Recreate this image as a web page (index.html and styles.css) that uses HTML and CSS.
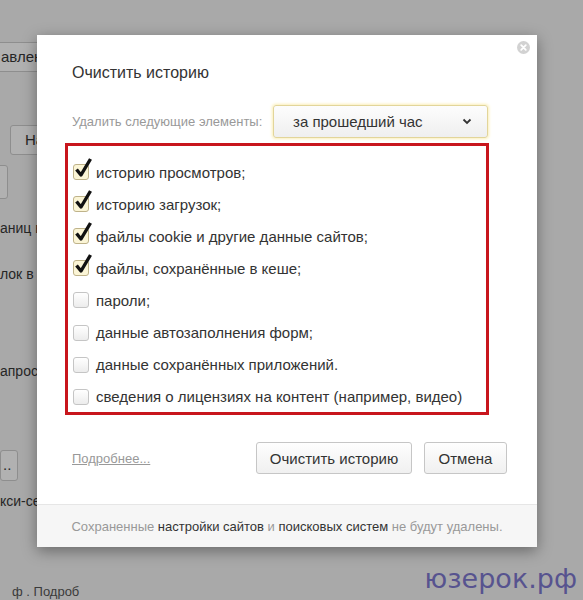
FILE: index.html
```html
<!DOCTYPE html>
<html lang="ru">
<head>
  <meta charset="UTF-8">
  <title>Очистить историю</title>
  <link rel="stylesheet" href="styles.css">
</head>
<body>
  <div class="page">
    <div class="bg-btn bg-btn-top">авлени</div>
    <div class="bg-btn bg-btn-na">На</div>
    <div class="bg-btn bg-btn-small"></div>
    <p class="bg-text bg-t1">аниц в</p>
    <p class="bg-text bg-t2">лок в</p>
    <p class="bg-text bg-t3">апрос</p>
    <div class="bg-btn bg-btn-low">..</div>
    <p class="bg-text bg-t4">кси-сер</p>
    <p class="bg-text bg-t5">ф . Подроб</p>
  </div>

  <div class="dialog">
    <span class="close">
      <svg width="13" height="13" viewBox="0 0 13 13">
        <circle cx="6.5" cy="6.5" r="6.5" fill="#d2d2d2"/>
        <path d="M4.2 4.2 L8.8 8.8 M8.8 4.2 L4.2 8.8" stroke="#fff" stroke-width="1.8" stroke-linecap="round"/>
      </svg>
    </span>
    <div class="body">
      <h1>Очистить историю</h1>

      <div class="period">
        <span class="label">Удалить следующие элементы:</span>
        <div class="select">
          <span>за прошедший час</span>
          <svg width="10" height="7" viewBox="0 0 10 7"><path d="M1.5 1.5 L5 5 L8.5 1.5" fill="none" stroke="#333" stroke-width="1.8"/></svg>
        </div>
      </div>

      <div class="items">
        <div class="item"><span class="box checked"><svg width="22" height="24" viewBox="0 0 22 24"><path d="M3.5 13.5 L8 19 L17.5 3" fill="none" stroke="#111" stroke-width="3.4" stroke-linejoin="round"/></svg></span>историю просмотров;</div>
        <div class="item"><span class="box checked"><svg width="22" height="24" viewBox="0 0 22 24"><path d="M3.5 13.5 L8 19 L17.5 3" fill="none" stroke="#111" stroke-width="3.4" stroke-linejoin="round"/></svg></span>историю загрузок;</div>
        <div class="item"><span class="box checked"><svg width="22" height="24" viewBox="0 0 22 24"><path d="M3.5 13.5 L8 19 L17.5 3" fill="none" stroke="#111" stroke-width="3.4" stroke-linejoin="round"/></svg></span>файлы cookie и другие данные сайтов;</div>
        <div class="item"><span class="box checked"><svg width="22" height="24" viewBox="0 0 22 24"><path d="M3.5 13.5 L8 19 L17.5 3" fill="none" stroke="#111" stroke-width="3.4" stroke-linejoin="round"/></svg></span>файлы, сохранённые в кеше;</div>
        <div class="item"><span class="box"></span>пароли;</div>
        <div class="item"><span class="box"></span>данные автозаполнения форм;</div>
        <div class="item"><span class="box"></span>данные сохранённых приложений.</div>
        <div class="item"><span class="box"></span>сведения о лицензиях на контент (например, видео)</div>
      </div>

      <div class="actions">
        <a class="more" href="#">Подробнее...</a>
        <div class="buttons">
          <button class="btn btn-clear">Очистить историю</button>
          <button class="btn btn-cancel">Отмена</button>
        </div>
      </div>
    </div>
    <div class="footer">
      <p>Сохраненные <span class="dark">настройки сайтов</span> и <span class="dark">поисковых систем</span> не будут удалены.</p>
    </div>
  </div>

  <div class="watermark">юзерок.рф</div>
</body>
</html>
```

FILE: styles.css
```css
html, body {
  margin: 0;
  height: 600px;
  overflow: hidden;
}
body {
  background-color: #a9a9a9;
  font-family: Arial, "Liberation Sans", sans-serif;
  color: #333;
  position: relative;
}

/* page behind the overlay */
.page {
  padding-top: 42px;
  color: #262626;
  font-size: 15px;
}
.bg-btn {
  box-sizing: border-box;
  height: 30px;
  line-height: 28px;
  background: #b1b1b1;
  border: 1px solid #8e8e8e;
  border-radius: 3px;
  overflow: hidden;
  white-space: nowrap;
}
.bg-btn-top {
  width: 60px;
  margin-left: -8px;
  padding-left: 8px;
}
.bg-btn-na {
  width: 50px;
  margin-left: 10px;
  margin-top: 53px;
  padding-left: 14px;
}
.bg-btn-small {
  width: 16px;
  margin-left: -8px;
  margin-top: 10px;
  height: 34px;
}
.bg-text {
  margin: 0;
  line-height: 18px;
  font-size: 14px;
  white-space: nowrap;
}
.bg-t1 { margin-top: 20px; }
.bg-t2 { margin-top: 28px; }
.bg-t3 { margin-top: 79px; }
.bg-btn-low {
  width: 18px;
  margin-top: 70px;
  height: 31px;
  padding-left: 2px;
}
.bg-t4 { margin-top: 11px; }
.bg-t5 {
  margin-top: 74px;
  margin-left: 12px;
  font-size: 13px;
  line-height: 15px;
  color: #3a3a3a;
}

/* dialog */
.dialog {
  position: absolute;
  left: 37px;
  top: 35px;
  width: 500px;
  height: 512px;
  background: #fff;
  box-shadow: 0 4px 14px rgba(0, 0, 0, 0.38);
  display: flex;
  flex-direction: column;
}
.close {
  position: absolute;
  right: 7px;
  top: 6px;
  width: 13px;
  height: 13px;
}
.close svg {
  display: block;
}
.body {
  flex: 1;
  padding: 28px 30px 0 35px;
}
h1 {
  margin: 0;
  font-size: 16px;
  font-weight: normal;
  color: #333;
  line-height: 19px;
}
.period {
  display: flex;
  align-items: center;
  margin-top: 23px;
}
.label {
  font-size: 13px;
  color: #999;
  width: 201px;
}
.select {
  box-sizing: border-box;
  width: 215px;
  height: 33px;
  border: 1px solid #e2d59a;
  border-radius: 3px;
  background: linear-gradient(#fdfdfd, #efefef);
  box-shadow: 0 0 3px 1px #fbefb6;
  display: flex;
  align-items: center;
  justify-content: space-between;
  padding: 0 15px 0 19px;
  font-size: 15px;
  color: #333;
}
.select svg {
  display: block;
}

.items {
  box-sizing: border-box;
  width: 424px;
  height: 272px;
  margin-left: -7px;
  margin-top: 5px;
  border: 3px solid #c8161d;
  padding: 10px 0 0 5px;
}
.item {
  height: 32.1px;
  display: flex;
  align-items: center;
  font-size: 15px;
  color: #333;
}
.box {
  box-sizing: border-box;
  width: 16px;
  height: 16px;
  border: 1px solid #c5c5c5;
  border-radius: 3px;
  background: linear-gradient(#fff, #ececec);
  margin-right: 7px;
  position: relative;
  flex-shrink: 0;
}
.box.checked {
  border-color: #bfb38a;
  background: #fbf5d6;
}
.box svg {
  position: absolute;
  left: -1px;
  top: -9px;
}

.actions {
  display: flex;
  align-items: center;
  justify-content: space-between;
  margin-top: 27px;
}
.more {
  font-size: 13px;
  color: #999;
}
.buttons {
  display: flex;
  gap: 12px;
}
.btn {
  box-sizing: border-box;
  height: 32px;
  border: 1px solid #c6c6c6;
  border-radius: 3px;
  background: linear-gradient(#fefefe, #f0f0f0);
  font-family: Arial, "Liberation Sans", sans-serif;
  font-size: 15px;
  color: #333;
  padding: 0;
}
.btn-clear { width: 156px; }
.btn-cancel { width: 83px; }

.footer {
  height: 42px;
  border-top: 1px solid #e6e6e6;
  background: #f6f6f6;
  display: flex;
  align-items: center;
  justify-content: center;
  font-size: 13px;
  color: #999;
}
.footer p {
  margin: 0;
}
.footer .dark {
  color: #333;
}

.watermark {
  position: absolute;
  right: 6px;
  bottom: 6px;
  font-family: "DejaVu Sans", Verdana, sans-serif;
  font-size: 27px;
  color: #57538f;
}
```
